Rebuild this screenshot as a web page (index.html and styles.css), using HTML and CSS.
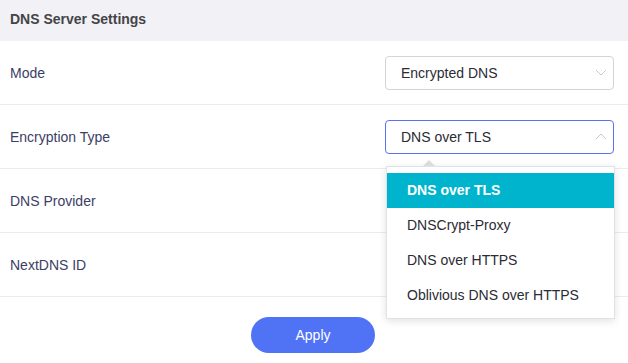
FILE: index.html
```html
<!DOCTYPE html>
<html>
<head>
<meta charset="utf-8">
<link rel="stylesheet" href="styles.css">
</head>
<body>
<div class="panel">
  <div class="panel-header">DNS Server Settings</div>
  <div class="row">
    <span class="label">Mode</span>
    <div class="select">
      <span class="select-value">Encrypted DNS</span>
      <svg class="chev" width="12" height="7" viewBox="0 0 12 7"><path d="M1 1 L6 6 L11 1" fill="none" stroke="#c8c8cc" stroke-width="1"/></svg>
    </div>
  </div>
  <div class="row">
    <span class="label">Encryption Type</span>
    <div class="select select-open">
      <span class="select-value">DNS over TLS</span>
      <svg class="chev" width="12" height="7" viewBox="0 0 12 7"><path d="M1 6 L6 1 L11 6" fill="none" stroke="#c8c8cc" stroke-width="1"/></svg>
      <div class="menu">
        <div class="menu-arrow"></div>
        <div class="menu-item active">DNS over TLS</div>
        <div class="menu-item">DNSCrypt-Proxy</div>
        <div class="menu-item">DNS over HTTPS</div>
        <div class="menu-item">Oblivious DNS over HTTPS</div>
      </div>
    </div>
  </div>
  <div class="row">
    <span class="label">DNS Provider</span>
  </div>
  <div class="row">
    <span class="label">NextDNS ID</span>
  </div>
  <div class="actions">
    <button class="apply">Apply</button>
  </div>
</div>
</body>
</html>
```
FILE: styles.css
```css
html, body {
  margin: 0;
  padding: 0;
  background: #ffffff;
  font-family: "Liberation Sans", Arial, sans-serif;
}

.panel {
  width: 628px;
}

.panel-header {
  height: 41px;
  box-sizing: border-box;
  background: #f2f2f6;
  padding-left: 10px;
  display: flex;
  align-items: center;
  font-size: 14px;
  font-weight: bold;
  color: #444448;
  padding-bottom: 3px;
}

.row {
  height: 64px;
  box-sizing: border-box;
  border-bottom: 1px solid #ebebef;
  display: flex;
  align-items: center;
  justify-content: space-between;
  padding: 0 14px 0 10px;
}

.label {
  font-size: 14px;
  color: #3d3d66;
}

.select {
  position: relative;
  width: 229px;
  height: 34px;
  box-sizing: border-box;
  border: 1px solid #d4d4d8;
  border-radius: 4px;
  display: flex;
  align-items: center;
  justify-content: space-between;
  padding: 0 6px 0 15px;
}

.select-open {
  border-color: #5a72ee;
}

.select-value {
  font-size: 14px;
  color: #2b2b33;
}

.chev {
  display: block;
}

.menu {
  position: absolute;
  top: 45px;
  left: 0;
  width: 229px;
  box-sizing: border-box;
  background: #ffffff;
  border: 1px solid #e2e2e6;
  box-shadow: 0 2px 8px rgba(0, 0, 0, 0.12);
  padding: 6px 0 5px;
  z-index: 10;
}

.menu-arrow {
  position: absolute;
  top: -7px;
  left: 36px;
  width: 0;
  height: 0;
  border-left: 6px solid transparent;
  border-right: 6px solid transparent;
  border-bottom: 6px solid #dcdce0;
}

.menu-item {
  height: 35px;
  display: flex;
  align-items: center;
  padding-left: 20px;
  font-size: 14px;
  color: #2b2b33;
}

.menu-item.active {
  background: #00b4cd;
  color: #ffffff;
  font-weight: bold;
}

.actions {
  display: flex;
  justify-content: center;
  padding-top: 20px;
}

.apply {
  width: 124px;
  height: 36px;
  border: none;
  border-radius: 18px;
  background: #5072f5;
  color: #ffffff;
  font-family: "Liberation Sans", Arial, sans-serif;
  font-size: 14px;
  margin-right: 2px;
}
```
